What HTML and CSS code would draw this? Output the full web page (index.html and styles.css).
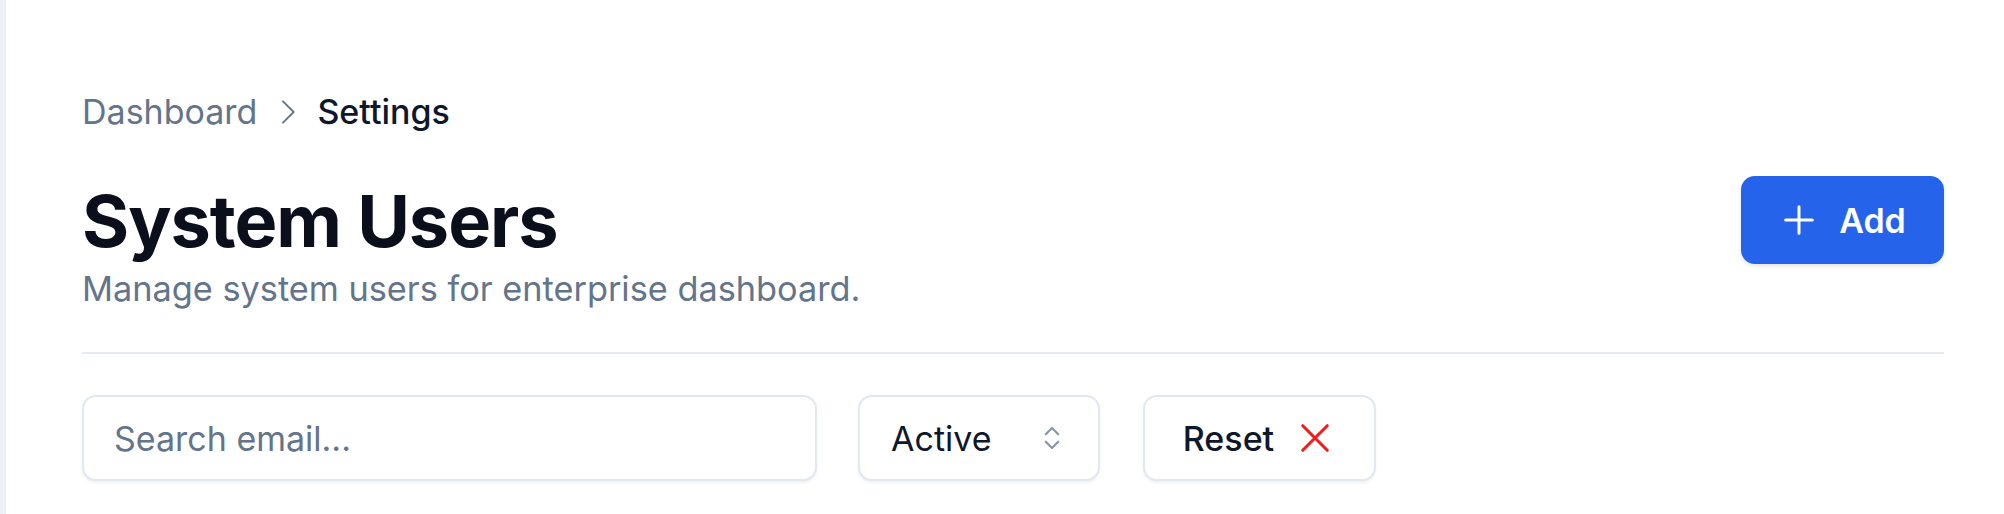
FILE: index.html
```html
<!DOCTYPE html>
<html lang="en">
<head>
  <meta charset="UTF-8">
  <title>System Users</title>
  <meta name="viewport" content="width=device-width, initial-scale=1.0">
  <link rel="stylesheet" href="styles.css">
</head>
<body>
  <div class="layout">
    <aside class="sidebar"></aside>
    <main class="content">
      <nav class="breadcrumb">
        <span class="crumb">Dashboard</span>
        <svg class="crumb-sep" viewBox="0 0 24 24" width="32" height="32"><path d="M9 4l8 8-8 8"/></svg>
        <span class="crumb current">Settings</span>
      </nav>

      <div class="page-header">
        <div class="page-title">
          <h1>System Users</h1>
          <p>Manage system users for enterprise dashboard.</p>
        </div>
        <button class="btn-add">
          <svg viewBox="0 0 24 24" width="40" height="40"><path d="M12 4v16M4 12h16"/></svg>
          <span>Add</span>
        </button>
      </div>

      <hr class="divider">

      <div class="filters">
        <input class="search" type="text" placeholder="Search email...">
        <div class="select">
          <span>Active</span>
          <svg viewBox="0 0 24 24" width="30" height="30"><path d="M7 9l5-5 5 5M7 15l5 5 5-5"/></svg>
        </div>
        <button class="btn-reset">
          <span>Reset</span>
          <svg viewBox="0 0 24 24" width="42" height="42"><path d="M5 5l14 14M19 5L5 19"/></svg>
        </button>
      </div>
    </main>
  </div>
</body>
</html>
```

FILE: styles.css
```css
:root {
  --text: #0f172a;
  --muted: #64748b;
  --border: #e2e8f0;
  --primary: #2563eb;
  --danger: #f01d1d;
}

body {
  margin: 0;
  font-family: Inter, 'Noto Sans', sans-serif;
  background: #fff;
  color: var(--text);
}

.layout {
  display: flex;
  min-height: 100vh;
}

.sidebar {
  width: 6px;
  flex-shrink: 0;
  background: #edf1f7;
}

.content {
  flex: 1;
  padding: 89px 60px 0 76px;
}

.breadcrumb {
  display: flex;
  align-items: center;
  gap: 14px;
  font-size: 34px;
  line-height: 46px;
}

.crumb {
  color: var(--muted);
}

.crumb.current {
  color: var(--text);
  font-weight: 500;
}

.crumb-sep {
  fill: none;
  stroke: var(--muted);
  stroke-width: 1.4;
  stroke-linecap: round;
  stroke-linejoin: round;
}

.page-header {
  display: flex;
  justify-content: space-between;
  align-items: flex-start;
  margin-top: 41px;
}

.page-title h1 {
  margin: 0;
  font-size: 72px;
  line-height: 90px;
  font-weight: 700;
  letter-spacing: -1px;
  color: #0b0f1c;
}

.page-title p {
  margin: 0;
  font-size: 34.3px;
  line-height: 46px;
  color: var(--muted);
}

.btn-add {
  display: flex;
  align-items: center;
  justify-content: center;
  gap: 20px;
  width: 203px;
  height: 88px;
  padding: 0;
  border: none;
  border-radius: 14px;
  background: var(--primary);
  color: #fff;
  font-family: inherit;
  font-size: 34px;
  font-weight: 600;
  box-shadow: 0 2px 4px rgba(15, 23, 42, 0.12);
  cursor: pointer;
}

.btn-add svg {
  fill: none;
  stroke: #fff;
  stroke-width: 1.8;
  stroke-linecap: round;
}

.divider {
  margin: 40px 0 0;
  border: none;
  height: 2px;
  background: #e6ebf2;
}

.filters {
  display: flex;
  align-items: center;
  margin-top: 41px;
}

.search,
.select,
.btn-reset {
  box-sizing: border-box;
  height: 86px;
  border: 2px solid var(--border);
  border-radius: 14px;
  background: #fff;
  box-shadow: 0 2px 3px rgba(15, 23, 42, 0.06);
  font-family: inherit;
  font-size: 34px;
  color: var(--text);
}

.search {
  width: 735px;
  padding: 0 30px;
  outline: none;
}

.search::placeholder {
  color: var(--muted);
}

.select {
  display: flex;
  align-items: center;
  justify-content: space-between;
  width: 242px;
  margin-left: 41px;
  padding: 0 31px 0 31px;
}

.select svg {
  fill: none;
  stroke: #8a94a6;
  stroke-width: 1.7;
  stroke-linecap: round;
  stroke-linejoin: round;
}

.btn-reset {
  display: flex;
  align-items: center;
  justify-content: center;
  gap: 20px;
  width: 233px;
  margin-left: 43px;
  padding: 0;
  font-weight: 500;
  cursor: pointer;
}

.btn-reset svg {
  fill: none;
  stroke: var(--danger);
  stroke-width: 1.8;
  stroke-linecap: round;
}
```
